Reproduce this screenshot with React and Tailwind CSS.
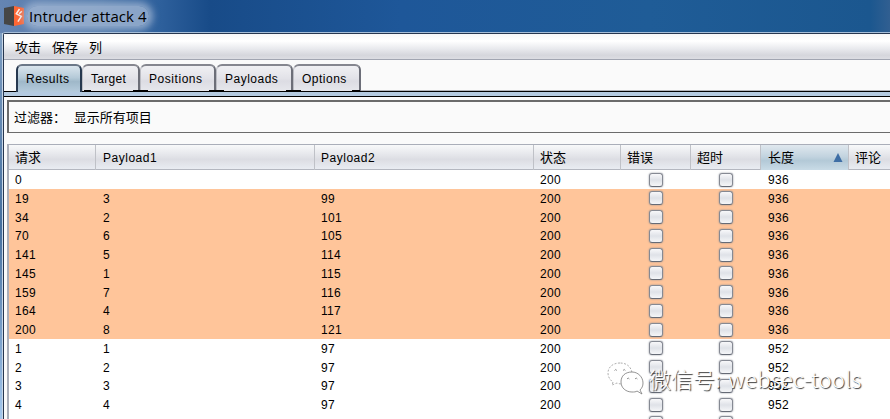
import React from "react";

const tabs = [
  { label: "Results", width: "w-[66px] tracking-[0.5px]", active: true, gap: "left-[66px] w-[7px]" },
  { label: "Target", width: "w-[58px] tracking-[0.3px]", gap: "left-[50px] w-[15px]" },
  { label: "Positions", width: "w-[76px] tracking-[0.55px]", gap: "left-[68px] w-[15px]" },
  { label: "Payloads", width: "w-[77px] tracking-[0.5px]", gap: "left-[69px] w-[15px]" },
  { label: "Options", width: "w-[68px] tracking-[0.5px]", gap: "left-[58px] w-[8px]" },
];

const columns = ["请求", "Payload1", "Payload2", "状态", "错误", "超时", "长度", "评论"];

const rows = [
  ["0", "", "", "936"],
  ["19", "3", "99", "936"],
  ["34", "2", "101", "936"],
  ["70", "6", "105", "936"],
  ["141", "5", "114", "936"],
  ["145", "1", "115", "936"],
  ["159", "7", "116", "936"],
  ["164", "4", "117", "936"],
  ["200", "8", "121", "936"],
  ["1", "1", "97", "952"],
  ["2", "2", "97", "952"],
  ["3", "3", "97", "952"],
  ["4", "4", "97", "952"],
  ["", "", "", ""],
];

const grid = "grid grid-cols-[87px_219px_219px_87px_70px_70px_88px_1fr]";

function Logo() {
  return (
    <svg width="20" height="20" viewBox="0 0 20 20" className="shrink-0">
      <path d="M0 2 10 0v20L0 18Z" fill="#464646" />
      <path d="M10 0 20 2v16L10 20Z" fill="#ff6633" />
      <path d="M15.5 3 12.3 7.8l5 2.6-3.4 5.2M17.8 5.2l-2.6 2.6" fill="none" stroke="#fff0e8" strokeWidth="1.5" />
    </svg>
  );
}

function Checkbox() {
  return (
    <span className="mt-[2.5px] block h-[14px] w-[14px] rounded-[3px] border-[1.5px] border-[#858993] border-b-[#666b76] bg-linear-to-b from-[#f8f8fa] via-[#dfe2e8] to-[#f5f6f8] shadow-[0_0_2px_#8a8d95]" />
  );
}

function Watermark() {
  return (
    <div className="absolute top-[361px] left-[607px] flex items-start">
      <svg width="37" height="34" viewBox="0 0 37 34" className="shrink-0" fill="#fff" stroke="#777" strokeWidth="0.8">
        <path strokeDasharray="2 1.5" stroke="#999" d="M13 2C6 2 1 6 1 12c0 4 2 7 5 9l-1 3 5-2c2 1 4 1 6 1 6 0 10-5 9-11C24 5 19 2 13 2Z" />
        <path d="M25 11c-7 0-11 4-11 10s5 10 11 10c2 0 4 0 5-1l5 3-2-4c2-2 3-4 3-7 0-6-5-11-11-11Z" />
        <path fill="none" d="M7.5 9.5q1.2-2 2.4 0M16 9.5q1.2-2 2.4 0M20 18q1.2-2 2.4 0M28 18q1.2-2 2.4 0" />
      </svg>
      <div className="ml-[5px] flex text-[22px] leading-[34px] font-light whitespace-nowrap text-white [text-shadow:1px_1px_1px_#333] font-['Noto_Sans_CJK_SC',sans-serif]">
        <span className="w-[79px]">微信号:</span>
        <span className="tracking-[0.25px]">websec-tools</span>
      </div>
    </div>
  );
}

export default function App() {
  return (
    <div className="relative flex h-[419px] w-[890px] flex-col overflow-hidden bg-[#fafafa] text-[12px] text-black font-['Liberation_Sans','Noto_Sans_CJK_SC',sans-serif]">
      <header className="flex h-[33px] shrink-0 items-center bg-[linear-gradient(90deg,#6585b3_0,#4d76a8_100px,#2e609c_160px,#184b88_210px,#1e5799_400px,#1f5c97_650px,#1b578f_870px,#315f91_890px)] pb-px pl-1">
        <Logo />
        <div className="ml-[3px] rounded-full bg-[#a5bad5]/75 px-[2px] text-[15px] leading-[20px] tracking-[0.06px] shadow-[0_0_7px_4px_rgba(165,186,213,0.75)] font-['Open_Sans','Noto_Sans',sans-serif]">Intruder attack 4</div>
      </header>
      <div className="flex min-h-0 flex-1">
        <div className="w-[2px] shrink-0 bg-linear-to-b from-[#7e9ec2] via-[#456f9e] to-[#a5c8ed]" />
        <div className="w-px shrink-0 bg-[#c7d6e7]" />
        <main className="flex min-w-0 flex-1 flex-col rounded-tl-[2px] border-t border-l border-[#26364f] shadow-[0_-1px_0_#a5bdd8]">
          <nav className="flex h-[26px] shrink-0 gap-[11px] border-b border-[#a1a5b1] bg-[linear-gradient(#f7f7f8,#fff_28%,#e8e9ed_60%,#d5d6dc_85%,#dcdde2)] pl-[11px] text-[13px] leading-[28px]">
            <span>攻击</span>
            <span>保存</span>
            <span>列</span>
          </nav>
          <div className="flex h-[32px] shrink-0 items-end border-b border-black pl-[12px]">
            {tabs.map((tab) => (
              <div
                key={tab.label}
                className={`relative ${tab.width} rounded-t-[6px] border-b-0 ${tab.active ? "-mb-px h-[28px] border-2 border-[#26384f] border-t-[#6c7888] bg-[linear-gradient(#dae5ed,#b5cad8_45%,#9fb8c9_60%,#b5cbdc)] pl-[8px]" : "h-[27px] border-t-2 border-r-2 border-l border-[#6c6e78] border-t-[#85868f] border-l-[#bbbcc3] bg-[linear-gradient(#f0f0f3,#e2e2e8_50%,#dcdce3_60%,#e6e7ec)] pl-[8px]"} leading-[27px]`}
              >
                {tab.label}
                <i className={`absolute top-[24px] z-10 h-px bg-black ${tab.gap}`} />
              </div>
            ))}
            <div className="h-px flex-1 bg-[#b5b7bc]" />
          </div>
          <div className="h-[5px] shrink-0 border-b border-black bg-[#b4cae0]" />
          <section className="mt-[3px] ml-[3px] h-[33px] shrink-0 border-t-2 border-b border-l-2 border-[#6b6b6b] pl-[5px] text-[13px] leading-[32px]">
            <span className="mr-[4px]">过滤器：</span> 显示所有项目
          </section>
          <section className="mt-[11px] ml-[3px] flex min-h-0 flex-1 flex-col border-t border-l-2 border-[#aaaeb9] bg-white">
            <div className={`${grid} h-[25px] shrink-0 border-b border-[#b4b7c0] bg-[linear-gradient(#f8f9fa,#e8e9ed_35%,#dcdde3_60%,#e9ecf2)]`}>
              {columns.map((name, i) => (
                <div
                  key={name}
                  className={`flex items-start justify-between ${i < 7 ? "border-r border-[#bfc1c7]" : ""} ${i === 6 ? "bg-[linear-gradient(#e0e8ee,#c2d3df_45%,#b3c9d7_60%,#cbdde8)] pr-[5px] pl-[7px]" : i === 1 ? "pl-[7px]" : "pl-[6px]"} ${i === 1 || i === 2 ? "leading-[26px] tracking-[0.52px]" : "text-[13px] leading-[26px]"}`}
                >
                  {name}
                  {i === 6 && (
                    <svg width="10" height="9" viewBox="0 0 10 9" className="mt-2">
                      <path d="M5 0 9.5 9h-9Z" fill="#3e6ea5" />
                    </svg>
                  )}
                </div>
              ))}
            </div>
            <div className="min-h-0 flex-1 overflow-hidden">
              {rows.map(([id, p1, p2, length], i) => (
                <div key={i} className={`${grid} h-[18.75px] leading-[20px] tracking-[0.33px] ${i > 0 && i < 9 ? "bg-[#ffc59a]" : "bg-white"}`}>
                  <span className="pl-[6px]">{id}</span>
                  <span className="pl-[7px]">{p1}</span>
                  <span className="pl-[6px]">{p2}</span>
                  <span className="pl-[6px]">{id && "200"}</span>
                  <span className="pl-[28px]"><Checkbox /></span>
                  <span className="pl-[28px]"><Checkbox /></span>
                  <span className="pl-[7px]">{length}</span>
                  <span />
                </div>
              ))}
            </div>
          </section>
        </main>
      </div>
      <Watermark />
    </div>
  );
}
